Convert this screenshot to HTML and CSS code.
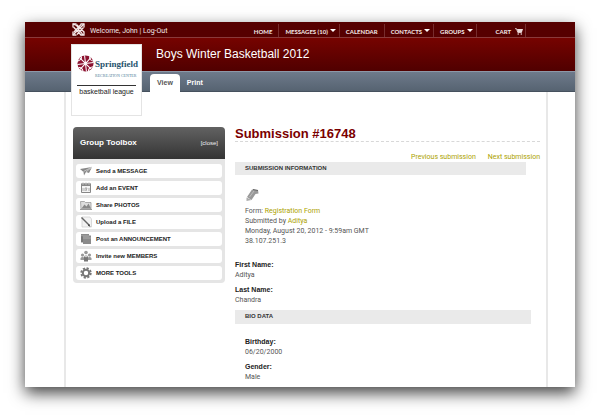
FILE: index.html
```html
<!DOCTYPE html>
<html lang="en">
<head>
<meta charset="utf-8">
<title>Submission #16748</title>
<link rel="stylesheet" href="styles.css">
</head>
<body>
<div class="window">
  <div class="topbar">
    <svg class="brand" viewBox="0 0 13 13" aria-hidden="true">
      <g fill="none" stroke="#f4e9e9" stroke-width="1.300">
        <path d="M1 4.500V1h3.500M8.500 1H12v3.500M12 8.500V12H8.500M4.500 12H1V8.500"/>
        <path d="M1 1l3.500 1.500L11 12M12 1L8.500 4.500 1 12M1.500 4l7.500 8M4.500 1.500L12 9M2 9l7-7.500M5 11.500l6.500-7"/>
      </g>
    </svg>
    <p class="welcome">Welcome, John | <a href="#">Log-Out</a></p>
    <nav class="nav">
      <a href="#">HOME</a>
      <button class="drop" type="button">MESSAGES (10)</button>
      <a href="#">CALENDAR</a>
      <button class="drop" type="button">CONTACTS</button>
      <button class="drop" type="button">GROUPS</button>
      <a class="cart" href="#">CART
        <svg class="cart-icon" viewBox="0 0 8 7" aria-hidden="true"><path d="M0 .7h1.500l1.300 3.800h4" fill="none" stroke="#eadada" stroke-width=".9"/><path d="M2 1h6L7 4H2.800z" fill="#eadada"/><circle cx="3.200" cy="6" r=".8" fill="#eadada"/><circle cx="6.300" cy="6" r=".8" fill="#eadada"/></svg>
      </a>
    </nav>
  </div>
  <header class="banner">
    <h1>Boys Winter Basketball 2012</h1>
    <a class="logo" href="#">
      <span class="logo-top">
        <svg class="ball" viewBox="0 0 18 18" aria-hidden="true"><circle cx="9" cy="9" r="8.500" fill="#8c1230"/><g stroke="#fff" stroke-width="1.100" fill="none"><path d="M3 3l12 12M15 2.500L3 15.500M9 9L8 .5M9 9l8.500-1M9 9l1 8.500M9 9l-8.500 1"/><path d="M4.500 1.500q1.500 3-4 5M13.500 1.500q-1 4 4 5M1.500 13.500q4-1 5 4M12 17.500q0-4 5-5"/></g></svg>
        <span class="logo-words"><span class="logo-name">Springfield</span><span class="logo-sub">RECREATION CENTER</span></span>
      </span>
      <span class="logo-league">basketball league</span>
    </a>
  </header>
  <div class="tabs">
    <a class="tab current" href="#">View</a>
    <a class="tab" href="#">Print</a>
  </div>
  <div class="page">
    <aside class="toolbox">
      <div class="toolbox-head"><h2>Group Toolbox</h2><button type="button">[close]</button></div>
      <ul class="tools">
        <li><a href="#"><svg viewBox="0 0 12 12" aria-hidden="true"><path d="M0 4l12-2-3 6-3-1-2 3.500L3.500 7z" fill="#888"/><path d="M3.500 6.500L12 2 6 7" fill="none" stroke="#ddd" stroke-width=".7"/></svg>Send a MESSAGE</a></li>
        <li><a href="#"><svg viewBox="0 0 12 12" aria-hidden="true"><path d="M1.500 2h9v8.500h-9z" fill="#f4f4f4" stroke="#888"/><path d="M1 1.500h10V4H1z" fill="#888"/><path d="M3 .5V3M6 .5V3M9 .5V3" stroke="#bbb"/><path d="M3 6v3M5 9V6h2L6 9M9 6v3" stroke="#999" fill="none" stroke-width=".8"/></svg>Add an EVENT</a></li>
        <li><a href="#"><svg viewBox="0 0 12 12" aria-hidden="true"><path d="M.5 2.500h4l1 1h5.500V10H1z" fill="#ddd" stroke="#999" stroke-width=".8"/><path d="M1.500 9.500l3-4 2 2 2-3 2.500 5z" fill="#888"/><path d="M0 10.500h12" stroke="#999"/></svg>Share PHOTOS</a></li>
        <li><a href="#"><svg viewBox="0 0 12 12" aria-hidden="true"><path d="M2 1h8l1.500 2v8H2z" fill="#f3f3f3" stroke="#ccc" stroke-width=".7"/><path d="M1.500 1.500l8 8" stroke="#666" stroke-width="1.500"/><path d="M9 8l1.500 3L8 9.500z" fill="#333"/></svg>Upload a FILE</a></li>
        <li><a href="#"><svg viewBox="0 0 12 12" aria-hidden="true"><path d="M1 1h8v1.500h2V11H3V9.500H1z" fill="#8b8b8b"/><path d="M1 3h8M3 5h8" stroke="#bbb" stroke-width=".7"/><path d="M2 3v6" stroke="#666"/></svg>Post an ANNOUNCEMENT</a></li>
        <li><a href="#"><svg viewBox="0 0 12 12" aria-hidden="true"><g fill="#999"><circle cx="6" cy="2.500" r="1.800"/><circle cx="2.500" cy="5" r="1.600"/><circle cx="9.500" cy="5" r="1.600"/><path d="M.5 10V8l2-1.500L4.500 8v2zM7.500 10V8l2-1.500 2 1.500v2z"/></g><path d="M4 11.500V7q2-4 4 0v4.500z" fill="#777"/><circle cx="6" cy="6" r="1.300" fill="#ccc"/></svg>Invite new MEMBERS</a></li>
        <li><a href="#"><svg viewBox="0 0 12 12" aria-hidden="true"><circle cx="6" cy="6" r="4.800" fill="none" stroke="#777" stroke-width="1.800" stroke-dasharray="2.200 1.570"/><circle cx="6" cy="6" r="3.200" fill="none" stroke="#777" stroke-width="2"/></svg>MORE TOOLS</a></li>
      </ul>
    </aside>
    <main class="main">
      <h2 class="title">Submission #16748</h2>
      <nav class="pager"><a href="#">Previous submission</a><a href="#">Next submission</a></nav>
      <h3 class="bar">SUBMISSION INFORMATION</h3>
      <section class="info">
        <svg class="pencil" viewBox="0 0 14 14" aria-hidden="true"><path d="M7 1.500l6 .5.5 3.500-3 .5-4 6-4.500-3z" fill="#999"/><path d="M4.500 9l4.500-6" stroke="#ccc" stroke-width=".7"/><path d="M1.500 9.500l5 2.500-5 1z" fill="#aaa"/><path d="M8 1.500l5 1" stroke="#666" fill="none"/></svg>
        <p>Form: <a href="#">Registration Form</a></p>
        <p>Submitted by <a href="#">Aditya</a></p>
        <p>Monday, August 20, 2012 - 9:59am GMT</p>
        <p>38.107.251.3</p>
      </section>
      <dl class="fields">
        <div><dt>First Name:</dt><dd>Aditya</dd></div>
        <div><dt>Last Name:</dt><dd>Chandra</dd></div>
      </dl>
      <h3 class="bar bio">BIO DATA</h3>
      <dl class="fields inset">
        <div><dt>Birthday:</dt><dd>06/20/2000</dd></div>
        <div><dt>Gender:</dt><dd>Male</dd></div>
      </dl>
    </main>
  </div>
</div>
</body>
</html>
```
FILE: styles.css
```css
* { box-sizing: border-box; margin: 0; padding: 0; }
body {
  padding: 22px 25px 33px;
  background: #fff;
  color: #555;
  font: 7px/10px Roboto, "Liberation Sans", sans-serif;
}
a { color: inherit; text-decoration: none; }
button { border: 0; background: none; color: inherit; font: inherit; cursor: pointer; }
svg { display: block; flex: none; }
ul { list-style: none; }

.window {
  display: flex;
  flex-direction: column;
  min-height: calc(100vh - 55px);
  background: #fff;
  box-shadow: 0 6px 15px rgba(0, 0, 0, .75);
}

.topbar {
  display: flex;
  height: 16px;
  padding: 0 49px 0 47px;
  border-bottom: 1px solid #8a3a3a;
  background: #560000;
  color: #f4e9e9;
}
.brand { width: 13px; height: 13px; margin-top: 1px; }
.welcome { margin-left: 5px; padding-top: 4px; }
.nav {
  display: flex;
  margin-left: auto;
  padding-top: 2px;
  font: bold 6px/13px Lato, "Liberation Sans", sans-serif;
}
.nav > * {
  display: flex;
  align-items: center;
  padding: 1px 6px 0;
  border-right: 1px solid #762c2c;
  white-space: nowrap;
}
.nav .drop { padding-right: 3px; gap: 2px; }
.drop::after {
  content: "";
  margin-bottom: 1px;
  border: 3px solid transparent;
  border-top-color: #fff;
  border-bottom: 0;
}
.nav .cart { padding: 1px 2px 0 19px; gap: 4px; }
.cart-icon { width: 8px; height: 7px; }

.banner {
  position: relative;
  height: 33px;
  padding: 8px 0 0 131px;
  background: linear-gradient(#760300, #500000);
  color: #fff;
}
.banner h1 { font: 12px/16px "Liberation Sans", sans-serif; }
.logo {
  position: absolute;
  z-index: 1;
  top: 6px;
  left: 46px;
  width: 71px;
  height: 72px;
  padding: 10px 5px;
  border: 1px solid #e4e4e4;
  background: #fff;
}
.logo-top { display: flex; gap: 1px; height: 31px; border-bottom: 1px solid #333; }
.ball { width: 17px; height: 17px; }
.logo-words { display: flex; flex-direction: column; color: #26536d; white-space: nowrap; }
.logo-name { font: bold 9px/18px "Liberation Serif", serif; }
.logo-sub { color: #4f7f98; font: 4px/6px "Liberation Serif", serif; }
.logo-league { display: block; color: #222; font: 7px/12px "Liberation Sans", sans-serif; text-align: center; white-space: nowrap; }

.tabs {
  display: flex;
  align-items: flex-end;
  height: 21px;
  padding-left: 125px;
  border-top: 1px solid #8d98a8;
  border-bottom: 1px solid #46515e;
  background: linear-gradient(#6e7a8b, #566371);
  color: #fff;
  font: bold 7px/17px "Liberation Sans", sans-serif;
}
.tab { height: 17px; padding: 0 7px; }
.tab.current { height: 18px; margin-bottom: -1px; border-radius: 4px 4px 0 0; background: #fff; color: #555; }

.page {
  display: flex;
  flex: 1;
  align-items: flex-start;
  gap: 10px;
  margin: 0 27px 0 39px;
  padding: 35px 6px 4px 7px;
  border: solid #e8e8e8;
  border-width: 0 2px;
}
.toolbox { flex: 0 0 152px; border-radius: 4px; background: #e5e5e5; overflow: hidden; }
.toolbox-head {
  display: flex;
  align-items: center;
  justify-content: space-between;
  height: 32px;
  padding: 0 7px;
  background: linear-gradient(#626262, #343434);
  color: #fff;
}
.toolbox-head h2 { font: bold 8px/12px "Liberation Sans", sans-serif; }
.toolbox-head button { font: 6px/12px "Liberation Sans", sans-serif; color: #eee; }
.tools { display: grid; gap: 3px; padding: 5px 3px 3px; }
.tools a {
  display: flex;
  align-items: center;
  gap: 4px;
  height: 14px;
  padding-left: 4px;
  border-radius: 3px;
  background: #fff;
  color: #222;
  font: bold 6px/14px "Liberation Sans", sans-serif;
}
.tools svg { width: 12px; height: 12px; }

.main { flex: 1; }
.title {
  border-bottom: 1px dashed #d8d8d8;
  color: #7b0000;
  font: bold 13px/14px "Liberation Sans", sans-serif;
}
.pager { display: flex; justify-content: flex-end; gap: 12px; padding: 10px 0 0; }
.pager a, .info a { color: #aca200; }
.bar {
  height: 13px;
  margin-right: 14px;
  padding-left: 10px;
  background: #eaeaea;
  color: #333;
  font: bold 6px/13px "Liberation Sans", sans-serif;
}
.info { padding: 13px 10px 14px; }
.pencil { width: 14px; height: 14px; margin-bottom: 4px; }
.fields { display: grid; gap: 5px; }
.fields dt { color: #222; font: bold 7px/10px "Liberation Sans", sans-serif; }
.bar.bio { height: 14px; margin: 5px 9px 13px 0; }
.inset { padding-left: 10px; }
```
